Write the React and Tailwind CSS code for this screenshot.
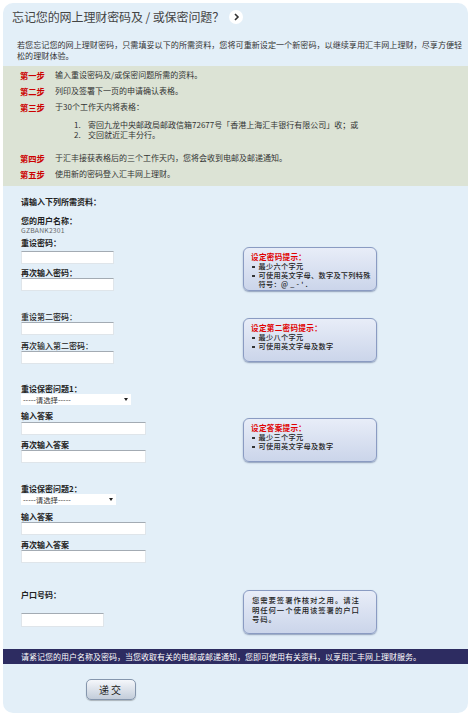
import React from "react";

const Bullet = ({ children }) => (
  <div className="flex items-start h-[9px] leading-[9px]">
    <span className="w-[2.5px] h-[2.5px] bg-[#333] mt-[3.5px] ml-[1px] mr-[4px] shrink-0" />
    <span>{children}</span>
  </div>
);

const HintBox = ({ title, className = "", children }) => (
  <div
    className={
      "w-[134px] h-[44px] rounded-[6px] border border-[#8a9bc2] bg-linear-to-b from-[#e8edf8] to-[#cbd5ea] shadow-[0_1px_1.5px_rgba(40,60,110,0.45)] pl-[7px] pt-[4px] text-[7.2px] text-[#222] font-medium tracking-[0.3px] " +
      className
    }
  >
    {title && (
      <div className="h-[10px] leading-[10px] text-[#e00000] font-bold text-[7.6px]">{title}</div>
    )}
    {children}
  </div>
);

const Label = ({ children, className = "" }) => (
  <div className={"h-[10px] leading-[10px] text-[8px] font-bold text-[#222] whitespace-nowrap " + className}>
    {children}
  </div>
);

const Input = ({ w = "w-[93px]", className = "" }) => (
  <div className={"h-[13px] bg-white border border-[#dfe5ea] border-t-[#a3abb3] " + w + " " + className} />
);

const Select = ({ w }) => (
  <div className={"h-[11px] bg-white flex items-center text-[7.4px] text-[#333] relative " + w}>
    <span className="ml-[2px] leading-[11px] whitespace-nowrap">-----请选择-----</span>
    <span className="absolute right-[3px] top-[4px] w-0 h-0 border-l-[2.5px] border-r-[2.5px] border-t-[3px] border-l-transparent border-r-transparent border-t-[#222]" />
  </div>
);

const Step = ({ label, children }) => (
  <div className="flex items-center h-[16px] text-[8px] whitespace-nowrap">
    <span className="w-[35px] text-[#cc0000] font-bold text-[8.3px]">{label}</span>
    <span className="text-[#333]">{children}</span>
  </div>
);

export default function App() {
  return (
    <div className="w-[471px] min-h-[716px] bg-white pt-[3px] font-['Noto_Sans_CJK_SC','Noto_Sans','Liberation_Sans',sans-serif]">
      <div className="mx-[3px] rounded-[10px] bg-[#e3eff8] pb-[13px] overflow-hidden">
        {/* header */}
        <div className="h-[28px] flex items-center pl-[9px]">
          <span className="text-[12px] text-[#444] whitespace-nowrap tracking-[-0.1px]">
            忘记您的网上理财密码及 / 或保密问题？
          </span>
          <span className="ml-[5px] w-[14px] h-[14px] rounded-full bg-white flex items-center justify-center">
            <svg width="7" height="8" viewBox="0 0 7 8">
              <path d="M2 1 L5 4 L2 7" fill="none" stroke="#333" strokeWidth="1.6" />
            </svg>
          </span>
        </div>
        {/* intro */}
        <div className="mt-[8px] pl-[14px] text-[8.1px] text-[#333] leading-[11px] whitespace-nowrap">
          <div>若您忘记您的网上理财密码，只需填妥以下的所需资料，您将可重新设定一个新密码，以继续享用汇丰网上理财，尽享方便轻</div>
          <div>松的理财体验。</div>
        </div>
        {/* steps */}
        <div className="mt-[5px] bg-[#dce3d5] pl-[17px] pt-[1px] pb-[4px]">
          <Step label="第一步">输入重设密码及/或保密问题所需的资料。</Step>
          <Step label="第二步">列印及签署下一页的申请确认表格。</Step>
          <Step label="第三步">于30个工作天内将表格：</Step>
          <div className="mt-[5px] pl-[54px] text-[8px] text-[#333] whitespace-nowrap">
            <div className="flex h-[10px] leading-[10px]">
              <span className="w-[14px]">1.</span>
              <span>寄回九龙中央邮政局邮政信箱72677号「香港上海汇丰银行有限公司」收；或</span>
            </div>
            <div className="flex h-[10px] leading-[10px]">
              <span className="w-[14px]">2.</span>
              <span>交回就近汇丰分行。</span>
            </div>
          </div>
          <div className="mt-[10px]">
            <Step label="第四步">于汇丰接获表格后的三个工作天内，您将会收到电邮及邮递通知。</Step>
          </div>
          <Step label="第五步">使用新的密码登入汇丰网上理财。</Step>
        </div>

        {/* form */}
        <div className="pl-[18px]">
          <Label className="mt-[11px]">请输入下列所需资料：</Label>
          <Label className="mt-[9px]">您的用户名称：</Label>
          <div className="h-[9px] leading-[9px] text-[6.8px] text-[#666] tracking-[0.2px]">GZBANK2301</div>

          {/* group 1 */}
          <div className="flex mt-[3px]">
            <div className="w-[222px]">
              <Label>重设密码：</Label>
              <Input className="mt-[3px]" />
              <Label className="mt-[4px]">再次输入密码：</Label>
              <Input />
            </div>
            <HintBox title="设定密码提示：" className="mt-[9px]">
              <Bullet>最少六个字元</Bullet>
              <Bullet>可使用英文字母、数字及下列特殊</Bullet>
              <div className="h-[9px] leading-[9px] pl-[7.5px]">符号：@ _ - ' .</div>
            </HintBox>
          </div>

          {/* group 2 */}
          <div className="flex mt-[21px]">
            <div className="w-[222px]">
              <Label className="font-medium h-[9px]">重设第二密码：</Label>
              <Input />
              <Label className="mt-[6px] font-medium">再次输入第二密码：</Label>
              <Input />
            </div>
            <HintBox title="设定第二密码提示：" className="mt-[6px]">
              <Bullet>最少八个字元</Bullet>
              <Bullet>可使用英文字母及数字</Bullet>
            </HintBox>
          </div>

          {/* group 3 */}
          <div className="flex mt-[20px]">
            <div className="w-[222px]">
              <Label>重设保密问题1：</Label>
              <Select w="w-[110px]" />
              <Label className="mt-[6px]">输入答案</Label>
              <Input w="w-[125px]" className="mt-[1px]" />
              <Label className="mt-[5px]">再次输入答案</Label>
              <Input w="w-[125px]" />
            </div>
            <HintBox title="设定答案提示：" className="mt-[34px]">
              <Bullet>最少三个字元</Bullet>
              <Bullet>可使用英文字母及数字</Bullet>
            </HintBox>
          </div>

          {/* group 4 */}
          <div className="mt-[21px]">
            <Label>重设保密问题2：</Label>
            <Select w="w-[95px]" />
            <Label className="mt-[7px]">输入答案</Label>
            <Input w="w-[125px]" />
            <Label className="mt-[5px]">再次输入答案</Label>
            <Input w="w-[125px]" />
          </div>

          {/* group 5 */}
          <div className="flex mt-[27px]">
            <div className="w-[222px]">
              <Label>户口号码：</Label>
              <Input w="w-[83px]" className="mt-[13px] h-[14px]" />
            </div>
            <HintBox className="pt-[4px] pl-[8px]">
              <div className="text-[7.4px] leading-[9.5px] tracking-[0.9px] whitespace-nowrap">
                <div>您需要签署作核对之用。请注</div>
                <div>明任何一个使用该签署的户口</div>
                <div>号码。</div>
              </div>
            </HintBox>
          </div>
        </div>

        {/* dark bar */}
        <div className="mt-[15px] h-[15px] bg-[#2d2c61] pl-[18px] flex items-center text-[8px] text-white whitespace-nowrap">
          请紧记您的用户名称及密码，当您收取有关的电邮或邮递通知，您即可使用有关资料，以享用汇丰网上理财服务。
        </div>

        {/* submit */}
        <div className="mt-[15px] pl-[83px]">
          <button className="w-[50px] h-[21px] rounded-[5px] border border-[#8596ad] bg-linear-to-b from-[#f5f7fb] to-[#c3cdda] shadow-[0_1px_1px_rgba(0,0,0,0.25)] text-[10px] text-[#222] tracking-[2px] flex items-center justify-center">
            递交
          </button>
        </div>
      </div>
    </div>
  );
}
